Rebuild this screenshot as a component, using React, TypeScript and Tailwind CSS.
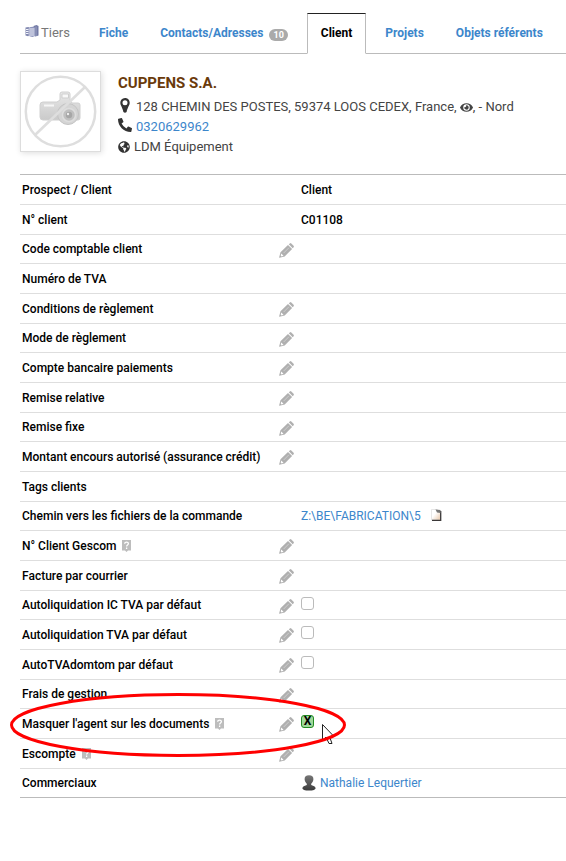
import type { ReactNode } from "react";
import { FaEye, FaGlobeAmericas, FaPhoneAlt } from "react-icons/fa";

type Row = {
  label: string;
  help?: boolean;
  editable?: boolean;
  check?: boolean;
  highlighted?: boolean;
  value?: ReactNode;
};

const rows: Row[] = [
  { label: "Prospect / Client", value: "Client" },
  { label: "N° client", value: "C01108" },
  { label: "Code comptable client", editable: true },
  { label: "Numéro de TVA" },
  { label: "Conditions de règlement", editable: true },
  { label: "Mode de règlement", editable: true },
  { label: "Compte bancaire paiements", editable: true },
  { label: "Remise relative", editable: true },
  { label: "Remise fixe", editable: true },
  { label: "Montant encours autorisé (assurance crédit)", editable: true },
  { label: "Tags clients" },
  { label: "Chemin vers les fichiers de la commande", value: <FilePath /> },
  { label: "N° Client Gescom", help: true, editable: true },
  { label: "Facture par courrier", editable: true },
  { label: "Autoliquidation IC TVA par défaut", editable: true, check: false },
  { label: "Autoliquidation TVA par défaut", editable: true, check: false },
  { label: "AutoTVAdomtom par défaut", editable: true, check: false },
  { label: "Frais de gestion", editable: true },
  { label: "Masquer l'agent sur les documents", help: true, editable: true, check: true, highlighted: true },
  { label: "Escompte", help: true, editable: true },
  { label: "Commerciaux", value: <SalesRep /> },
];

function FilePath() {
  return (
    <span className="flex items-center gap-2.5">
      <a href="#" className="font-normal text-[#3c86cb]">Z:\BE\FABRICATION\5</a>
      <svg width="11" height="12" viewBox="0 0 11 12" className="mb-0.5" aria-hidden="true">
        <defs>
          <linearGradient id="sheet" x1="0" y1="0" x2="1" y2="1">
            <stop offset="0.4" stopColor="#fff" />
            <stop offset="1" stopColor="#e8c4a4" />
          </linearGradient>
        </defs>
        <path d="M0.5 0.5H6L9.500 3.500V11H0.500Z" fill="url(#sheet)" stroke="#ddd" strokeWidth="0.7" />
        <path d="M9.700 2V11.300H1" fill="none" stroke="#3b3838" strokeWidth="1.300" />
        <path d="M4.500 0.500L9.500 1V4L6 3.500Z" fill="#777" />
      </svg>
    </span>
  );
}

function SalesRep() {
  return (
    <span className="flex items-center gap-1 pl-px">
      <svg width="14" height="16" viewBox="0 0 14 16" aria-hidden="true">
        <defs>
          <linearGradient id="bust" x1="0" y1="0" x2="0" y2="1">
            <stop offset="0" stopColor="#777" />
            <stop offset="1" stopColor="#3a3a3a" />
          </linearGradient>
        </defs>
        <path
          d="M7 0.300C10 0.300 11.500 1.900 11.400 4.300C11.300 6.600 10 8 9.200 8.800V10C10.500 10.700 13.200 11 13.600 13C13.800 14.700 11 15.600 7 15.600S0.200 14.700 0.400 13C0.800 11 3.500 10.700 4.800 10V8.800C4 8 2.700 6.600 2.600 4.300C2.500 1.900 4 0.300 7 0.300Z"
          fill="url(#bust)"
        />
      </svg>
      <a href="#" className="font-normal text-[#3c86cb]">Nathalie Lequertier</a>
    </span>
  );
}

function HelpMark() {
  return (
    <svg width="9" height="12" viewBox="0 0 9 12" role="img" aria-label="Aide">
      <path d="M0 0H9V10.500H6L4.500 12L3 10.500H0Z" fill="#bdbdbd" />
      <path d="M2.700 3.800C2.700 1.600 6.400 1.600 6.400 3.800C6.400 5 4.600 5 4.600 6.500M4.600 7.600V9" fill="none" stroke="#fff" strokeWidth="1.300" />
    </svg>
  );
}

function PencilIcon() {
  return (
    <svg width="15" height="15" viewBox="0 0 15 15" fill="currentColor" aria-hidden="true">
      <path d="M9.800 1.300L10.800 0.400Q11.600 -0.200 12.300 0.400L14.600 2.700Q15.200 3.400 14.600 4.200L13.700 5.200Z" />
      <path
        fillRule="evenodd"
        d="M9 1.900L13.100 6L5.700 13.400L0.400 14.800L0.100 14.500L1.500 9.300ZM2.300 10.600L1.700 12.500L2.600 13.400L4.500 12.700Z"
      />
      <path d="M9.900 4.800L4.700 10" stroke="#d8d8d8" strokeWidth="0.700" />
    </svg>
  );
}

function PinIcon() {
  return (
    <svg width="10" height="15" viewBox="0 0 10 15" className="mr-1.5 mb-1 ml-0.5" aria-hidden="true">
      <path
        fill="#333"
        fillRule="evenodd"
        d="M5 0C8 0 9.700 2.200 9.700 4.700C9.700 7.500 7.500 9 6.600 14Q5 15.500 3.400 14C2.500 9 0.300 7.500 0.300 4.700C0.300 2.200 2 0 5 0ZM5 2.200A2.500 2.500 0 1 0 5 7.200A2.500 2.500 0 1 0 5 2.200Z"
      />
    </svg>
  );
}

function BuildingIcon() {
  return (
    <svg width="14" height="13" viewBox="0 0 14 13" className="mb-1" aria-hidden="true">
      <path d="M8.500 1L11.500 0L13.500 1V10.500L10.500 11.500L8.500 10.500Z" fill="#737aa5" />
      <path d="M0.500 2.500L3.500 2L5 2.700V10.500L3 11.300L0.500 10.500Z" fill="#8188b0" />
      <path d="M4.500 2.300L7.500 1.700L10 2.300V11L7.500 12L4.500 11.300Z" fill="#8d94bc" />
      <path
        d="M1 4.500H3.500M1 6.500H3.500M1 8.500H3.500M5 4H9.500M5 6H9.500M5 8H9.500M5 10H9.500"
        stroke="#f0f2fa"
        strokeWidth="1"
      />
      <path d="M4.200 2.500V11" stroke="#e6e8f3" strokeWidth="0.700" />
      <path d="M11 1.500V11" stroke="#a7aecd" strokeWidth="0.800" />
    </svg>
  );
}

function NoPhoto() {
  return (
    <svg className="size-full" viewBox="0 0 79 79" role="img" aria-label="Pas de photo">
      <defs>
        <linearGradient id="body" x1="0" y1="0" x2="0" y2="1">
          <stop offset="0" stopColor="#e8e8e8" />
          <stop offset="1" stopColor="#cacaca" />
        </linearGradient>
      </defs>
      <path d="M19 33Q19 30 22 30H36L39 28V22Q39 20 41 20H47Q49 20 49 22V28L51 31H57Q59 31 59 33V46Q59 48 57 48H22Q19 48 19 45Z" fill="url(#body)" stroke="#d0d0d0" />
      <path d="M41 22H47.500V26H41Z" fill="#f8f8f8" stroke="#cfcfcf" />
      <path d="M23 33.500H33" stroke="#f6f6f6" strokeWidth="2" />
      <circle cx="47" cy="42" r="10.500" fill="#d4d4d4" stroke="#c4c4c4" />
      <circle cx="48" cy="43" r="6.500" fill="#c0c0c0" stroke="#dedede" strokeWidth="1.500" />
      <circle cx="48" cy="43" r="3.200" fill="#a6a6a6" />
      <circle cx="47" cy="42" r="1.200" fill="#eee" />
      <circle cx="39.500" cy="39.500" r="34.700" fill="none" stroke="#dedede" strokeWidth="2.500" />
      <path d="M14 63L64 15" stroke="#dedede" strokeWidth="2.500" />
    </svg>
  );
}

function Highlight() {
  return (
    <svg className="pointer-events-none absolute -top-4 -left-2.5 z-10 h-16 w-[337px]" viewBox="0 0 337 64" aria-hidden="true">
      <path d="M312.500 31.500V47.500L316 44L319 50.500H322L319.500 43.500H324Z" fill="#fff" stroke="#222" strokeWidth="1" />
      <ellipse cx="168" cy="32" rx="166.500" ry="30.500" fill="none" stroke="#f00" strokeWidth="3" />
    </svg>
  );
}

function Tab({ children, active }: { children: ReactNode; active?: boolean }) {
  return (
    <a
      href="#"
      aria-current={active ? "page" : undefined}
      className={
        active
          ? "-mb-px flex items-center border border-t-[#222] border-x-[#bbb] border-b-white bg-white px-[13px] pb-0.5 text-black"
          : "flex items-center gap-1.5 border border-transparent px-3 pb-px text-[#3c86cb]"
      }
    >
      {children}
    </a>
  );
}

function DataRow({ row }: { row: Row }) {
  const id = row.label.replace(/\W+/g, "-").toLowerCase();
  return (
    <tr className="h-[30px] border-b border-[#dedede] last:border-[#bbb] nth-[3n]:h-[29px]">
      <th scope="row" className="relative p-0 pl-0.5 text-left font-medium">
        <div className="flex items-center justify-between">
          <span className="flex items-center gap-1.5 whitespace-nowrap">
            {row.check === undefined ? row.label : <label htmlFor={id}>{row.label}</label>}
            {row.help && <HelpMark />}
          </span>
          {row.editable && (
            <button type="button" aria-label={`Modifier ${row.label}`} className="mr-[5px] pt-0.5 text-[#b0b0b0]">
              <PencilIcon />
            </button>
          )}
        </div>
        {row.highlighted && <Highlight />}
      </th>
      <td className="p-0 pl-0.5 font-medium">
        {row.check !== undefined && (
          <span className="grid size-[13px] -translate-y-0.5">
            <input
              id={id}
              type="checkbox"
              defaultChecked={row.check}
              className="peer col-start-1 row-start-1 size-[13px] appearance-none rounded-[3px] border border-[#bbb] bg-white checked:border-[#228b22] checked:bg-[#9fd89a]"
            />
            <span aria-hidden="true" className="pointer-events-none col-start-1 row-start-1 hidden text-center text-xs leading-[13px] font-bold peer-checked:block">
              X
            </span>
          </span>
        )}
        {row.value}
      </td>
    </tr>
  );
}

export default function App() {
  return (
    <main className="min-h-screen overflow-x-hidden bg-white pt-[13px] pl-5 font-[Roboto,'Liberation_Sans',sans-serif] text-black">
      <nav className="flex h-[41px] gap-1.5 border-b border-[#bbb] text-xs font-bold whitespace-nowrap">
        <span className="flex items-center gap-0.5 pr-2.5 pl-[5px] text-[13px] font-normal text-[#777]">
          <BuildingIcon />
          Tiers
        </span>
        <Tab>Fiche</Tab>
        <Tab>
          Contacts/Adresses
          <span className="mt-1 rounded-full bg-[#aaa] px-1 text-[9px] leading-3 text-white">10</span>
        </Tab>
        <Tab active>Client</Tab>
        <Tab>Projets</Tab>
        <Tab>Objets référents</Tab>
      </nav>

      <header className="mt-[17px] flex gap-[17px]">
        <div className="size-[81px] shrink-0 border border-[#ddd] shadow-[1px_1px_6px_#ddd]">
          <NoPhoto />
        </div>
        <div className="text-[13px] leading-5 whitespace-nowrap text-[#444]">
          <h1 className="pt-0.5 pb-1 text-[15px] leading-5 font-bold text-[#6a3a0a]">CUPPENS S.A.</h1>
          <p className="flex items-center">
            <PinIcon />
            128 CHEMIN DES POSTES, 59374 LOOS CEDEX, France,&nbsp;
            <FaEye size={13} />, - Nord
          </p>
          <p className="flex items-center gap-1">
            <FaPhoneAlt size={14} className="mb-1 text-[#333]" />
            <a href="tel:0320629962" className="text-[#3c86cb]">0320629962</a>
          </p>
          <p className="flex items-center gap-1">
            <FaGlobeAmericas size={12} className="text-[#333]" />
            LDM Équipement
          </p>
        </div>
      </header>

      <table className="mt-[17px] w-full table-fixed border-collapse border-t border-[#bbb] text-xs">
        <colgroup>
          <col className="w-[279px]" />
          <col />
        </colgroup>
        <tbody>
          {rows.map((row) => (
            <DataRow key={row.label} row={row} />
          ))}
        </tbody>
      </table>
    </main>
  );
}
